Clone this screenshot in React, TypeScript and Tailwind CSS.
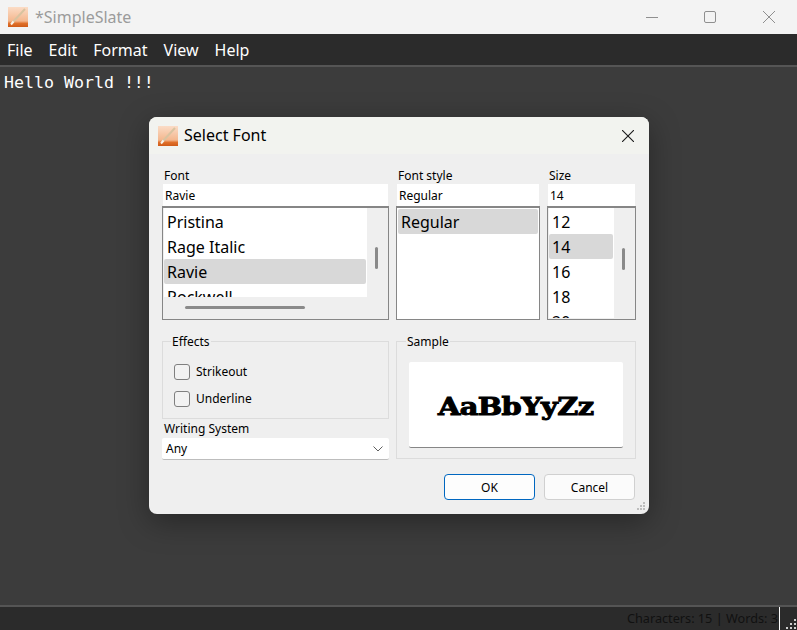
import React from 'react';

const UI_FONT = 'font-["Noto_Sans",sans-serif]';

const AppIcon = () => (
  <svg width="20" height="20" viewBox="0 0 20 20" className="shrink-0">
    <defs>
      <linearGradient id="iconBg" x1="0" y1="0" x2="0" y2="1">
        <stop offset="0" stopColor="#fbdcc6" />
        <stop offset="0.7" stopColor="#f4b78e" />
        <stop offset="0.82" stopColor="#e0702a" />
        <stop offset="1" stopColor="#cf5a17" />
      </linearGradient>
    </defs>
    <rect width="20" height="20" fill="url(#iconBg)" />
    <path d="M4 16 L17 2" stroke="#d8c3a0" strokeWidth="2" />
    <path d="M3 17.5 L5.5 14.5" stroke="#f7f2ea" strokeWidth="2" />
  </svg>
);

const ListRow = ({ label, selected }: { label: string; selected?: boolean }) => (
  <div
    className={`h-[25px] shrink-0 rounded-[2px] pl-[3px] text-[16px] leading-[27px] text-black ${
      selected ? 'bg-[#d8d8d8]' : ''
    }`}
  >
    {label}
  </div>
);

const Field = ({ label, value }: { label: string; value: string }) => (
  <div className="flex flex-col">
    <div className="h-[17px] pl-[2px] text-[12px] leading-[17px] text-black">{label}</div>
    <div className="mx-px h-[22px] bg-white pl-[2px] text-[12px] leading-[24px] text-black">{value}</div>
  </div>
);

const Check = ({ label }: { label: string }) => (
  <div className="flex h-4 items-center gap-[6px]">
    <span className="h-4 w-4 rounded-[3px] border border-[#7f7f7f] bg-[#f2f2f2]" />
    <span className="text-[12px] text-black">{label}</span>
  </div>
);

const Group = ({ title, className, children }: { title: string; className: string; children: React.ReactNode }) => (
  <fieldset className={`border border-[#dcdcdc] px-3 ${className}`}>
    <legend className="ml-[-3px] px-[1px] text-[12px] leading-[17px] text-black">{title}</legend>
    {children}
  </fieldset>
);

export default function App() {
  return (
    <div className={`relative flex h-[630px] w-full flex-col overflow-hidden bg-[#3c3c3c] ${UI_FONT}`}>
      {/* Title bar */}
      <div className="flex h-[34px] shrink-0 items-center bg-[#f3f3f3] pl-2">
        <AppIcon />
        <span className="ml-[7px] text-[16px] text-[#9b9b9b]">*SimpleSlate</span>
        <div className="ml-auto flex items-center">
          <svg width="12" height="12" viewBox="0 0 12 12" className="mr-[46px]">
            <path d="M0 6.5 H12" stroke="#8f8f8f" />
          </svg>
          <svg width="12" height="12" viewBox="0 0 12 12" className="mr-[47px]">
            <rect x="0.5" y="0.5" width="11" height="11" rx="1.5" fill="none" stroke="#8f8f8f" />
          </svg>
          <svg width="12" height="12" viewBox="0 0 12 12" className="mr-[22px]">
            <path d="M0 0 L12 12 M12 0 L0 12" stroke="#8f8f8f" />
          </svg>
        </div>
      </div>

      {/* Menu bar */}
      <div className="flex h-[33px] shrink-0 items-center gap-[16px] border-b-2 border-[#555555] bg-[#2b2b2b] pl-[7px] text-[16px] text-white">
        <span>File</span>
        <span>Edit</span>
        <span>Format</span>
        <span>View</span>
        <span>Help</span>
      </div>

      {/* Editor */}
      <div className='flex-1 pl-1 pt-[6px] font-["DejaVu_Sans_Mono",monospace] text-[16.6px] leading-5 text-white'>
        Hello World !!!
      </div>

      {/* Status bar */}
      <div className="flex h-[25px] shrink-0 items-center justify-end border-t-2 border-[#555555] bg-[#2b2b2b] text-[12.7px] text-[#111111]">
        <span>Characters: 15 | Words: 3</span>
        <span className="ml-[1px] h-[23px] w-px bg-white" />
        <svg width="17" height="12" viewBox="0 0 17 12" className="mt-[10px]">
          <path d="M14 1h2v2h-2zM10 5h2v2h-2zM14 5h2v2h-2zM6 9h2v2H6zM10 9h2v2h-2zM14 9h2v2h-2z" fill="#d0d0d0" />
        </svg>
      </div>

      {/* Select Font dialog */}
      <div className="absolute left-[149px] top-[117px] flex h-[397px] w-[500px] flex-col overflow-hidden rounded-[8px] bg-[#efefef] shadow-[0_8px_30px_rgba(0,0,0,0.35)]">
        <div className="flex h-[37px] shrink-0 items-center bg-[#f2f3ef] pl-[9px] pr-[15px]">
          <AppIcon />
          <span className="ml-[6px] mt-[-2px] text-[16px] text-black">Select Font</span>
          <svg width="12" height="12" viewBox="0 0 12 12" className="ml-auto">
            <path d="M0 0 L12 12 M12 0 L0 12" stroke="#1a1a1a" strokeWidth="1.1" />
          </svg>
        </div>

        <div className="flex flex-1 flex-col px-[13px] pt-[13px]">
          <div className="grid grid-cols-[227px_144px_89px] gap-x-[7px]">
            <Field label="Font" value="Ravie" />
            <Field label="Font style" value="Regular" />
            <Field label="Size" value="14" />

            {/* Font list */}
            <div className="relative h-[114px] border border-t-2 border-[#868686] bg-[#efefef]">
              <div className="ml-px flex h-[89px] w-[203px] flex-col overflow-hidden bg-white pr-px pt-px">
                <ListRow label="Pristina" />
                <ListRow label="Rage Italic" />
                <ListRow label="Ravie" selected />
                <ListRow label="Rockwell" />
              </div>
              <span className="absolute right-[10px] top-[39px] h-[22px] w-[3px] rounded-full bg-[#8a8a8a]" />
              <span className="absolute left-[22px] top-[98px] h-[3px] w-[120px] rounded-full bg-[#8a8a8a]" />
            </div>

            {/* Style list */}
            <div className="flex h-[114px] flex-col border border-t-2 border-[#868686] bg-white px-px pt-px">
              <ListRow label="Regular" selected />
            </div>

            {/* Size list */}
            <div className="relative h-[114px] border border-t-2 border-[#868686] bg-[#efefef]">
              <div className="ml-px flex h-[110px] w-[65px] flex-col overflow-hidden bg-white pr-px pt-px">
                <ListRow label="12" />
                <ListRow label="14" selected />
                <ListRow label="16" />
                <ListRow label="18" />
                <ListRow label="20" />
              </div>
              <span className="absolute right-[10px] top-[40px] h-[22px] w-[3px] rounded-full bg-[#8a8a8a]" />
            </div>
          </div>

          <div className="mt-[13px] grid grid-cols-[227px_240px] gap-x-[7px]">
            <div className="flex flex-col">
              <Group title="Effects" className="h-[86px] pl-[11px]">
                <div className="flex flex-col gap-[11px] pt-[14px]">
                  <Check label="Strikeout" />
                  <Check label="Underline" />
                </div>
              </Group>
              <div className="h-[19px] pl-[2px] text-[12px] leading-[19px] text-black">Writing System</div>
              <div className="flex h-[22px] items-center justify-between rounded-[2px] border-b border-[#bdbdbd] bg-white pl-1 pr-[6px] pt-px text-[12px] text-black">
                <span>Any</span>
                <svg width="10" height="6" viewBox="0 0 10 6">
                  <path d="M0.5 0.5 L5 5 L9.5 0.5" fill="none" stroke="#5f5f5f" />
                </svg>
              </div>
            </div>

            <Group title="Sample" className="h-[126px]">
              <div className="mt-[12px] flex h-[86px] items-center justify-center rounded-[2px] border-b border-[#868686] bg-white pt-1">
                <span className='scale-x-[1.2] font-["DejaVu_Serif",serif] text-[24px] leading-none font-black tracking-[-0.5px] text-black [-webkit-text-stroke:1px_black]'>
                  AaBbYyZz
                </span>
              </div>
            </Group>
          </div>

          <div className="mt-[14px] flex justify-end gap-[9px] pr-px">
            <div className="flex h-[26px] w-[91px] items-center justify-center rounded-[4px] border border-[#0067c0] bg-[#fdfdfd] pt-px text-[12px] text-black">
              OK
            </div>
            <div className="flex h-[26px] w-[91px] items-center justify-center rounded-[4px] border border-[#d0d0d0] bg-[#fbfbfb] pt-px text-[12px] text-black">
              Cancel
            </div>
          </div>
        </div>

        <svg width="11" height="11" viewBox="0 0 11 11" className="absolute bottom-[2px] right-[2px]">
          <path d="M7 1h2v2H7zM4 4h2v2H4zM7 4h2v2H7zM1 7h2v2H1zM4 7h2v2H4zM7 7h2v2H7z" fill="#bdbdbd" />
        </svg>
      </div>
    </div>
  );
}
